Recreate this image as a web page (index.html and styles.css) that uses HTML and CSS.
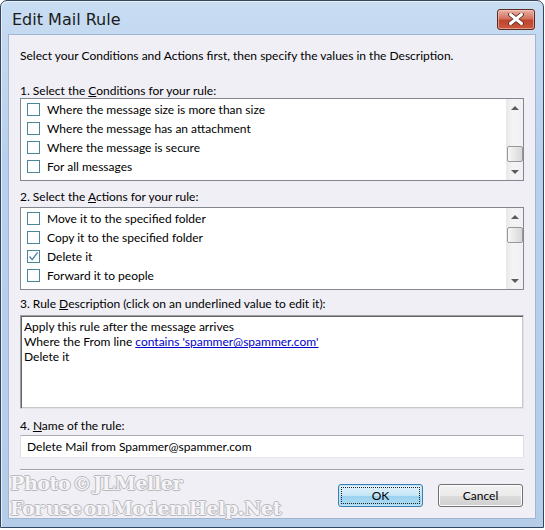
FILE: index.html
```html
<!DOCTYPE html>
<html lang="en">
<head>
  <meta charset="UTF-8" />
  <title>Edit Mail Rule</title>
  <link rel="stylesheet" href="styles.css">
</head>
<body>
  <div class="window">
    <div class="titlebar">
      <span class="title">Edit Mail Rule</span>
      <button class="close-btn" type="button" aria-label="Close">
        <svg width="18" height="12" viewBox="0 0 18 12">
          <path d="M3.5 1.5 L14.5 10.5 M14.5 1.5 L3.5 10.5" stroke="#5a2a20" stroke-width="4.8" stroke-linecap="round"/>
          <path d="M3.5 1.5 L14.5 10.5 M14.5 1.5 L3.5 10.5" stroke="#fff" stroke-width="3" stroke-linecap="round"/>
        </svg>
      </button>
    </div>
    <div class="client">
      <p class="intro">Select your Conditions and Actions first, then specify the values in the Description.</p>

      <div class="label label-1">1. Select the <u>C</u>onditions for your rule:</div>
      <div class="listbox">
        <ul class="items">
          <li><span class="check"></span>Where the message size is more than size</li>
          <li><span class="check"></span>Where the message has an attachment</li>
          <li><span class="check"></span>Where the message is secure</li>
          <li><span class="check"></span>For all messages</li>
        </ul>
        <div class="scrollbar">
          <span class="sb-btn"><span class="arrow-up"></span></span>
          <span class="sb-track"><span class="thumb thumb-low"></span></span>
          <span class="sb-btn"><span class="arrow-down"></span></span>
        </div>
      </div>

      <div class="label label-2">2. Select the <u>A</u>ctions for your rule:</div>
      <div class="listbox">
        <ul class="items">
          <li><span class="check"></span>Move it to the specified folder</li>
          <li><span class="check"></span>Copy it to the specified folder</li>
          <li><span class="check checked">
            <svg width="11" height="11" viewBox="0 0 11 11"><path d="M1.5 5.5 L4.2 8.6 L9.6 1.4" fill="none" stroke="#4f86ad" stroke-width="1.4"/></svg>
          </span>Delete it</li>
          <li><span class="check"></span>Forward it to people</li>
        </ul>
        <div class="scrollbar">
          <span class="sb-btn"><span class="arrow-up"></span></span>
          <span class="sb-track"><span class="thumb thumb-high"></span></span>
          <span class="sb-btn"><span class="arrow-down"></span></span>
        </div>
      </div>

      <div class="label label-3">3. Rule <u>D</u>escription (click on an underlined value to edit it):</div>
      <div class="desc">
        <div>Apply this rule after the message arrives</div>
        <div>Where the From line <a href="#">contains 'spammer@spammer.com'</a></div>
        <div>Delete it</div>
      </div>

      <div class="label label-4">4. <u>N</u>ame of the rule:</div>
      <input class="name-input" type="text" value="Delete Mail from Spammer@spammer.com" />

      <div class="separator"></div>

      <div class="buttons">
        <button class="btn btn-default" type="button"><span class="focus">OK</span></button>
        <button class="btn" type="button">Cancel</button>
      </div>

      <div class="watermark">
        <div>Photo © JLMeller</div>
        <div>For use on ModemHelp.Net</div>
      </div>
    </div>
  </div>
</body>
</html>
```

FILE: styles.css
```css
body {
  margin: 0;
  padding: 0;
  background-color: #fff;
  font-family: "Lato", "Open Sans", sans-serif;
  font-size: 12px;
  color: #000;
}
.window {
  width: 544px;
  height: 528px;
  box-sizing: border-box;
  border: 1px solid #34475f;
  border-radius: 7px 7px 0 0;
  background: linear-gradient(180deg, #c8dcf2 0%, #b9d0ec 30%, #b6cdea 100%);
  box-shadow: inset 1px 1px 0 #e6f0fa;
  padding: 0 7px 8px 7px;
  display: flex;
  flex-direction: column;
}
.titlebar {
  height: 33px;
  display: flex;
  align-items: center;
  justify-content: space-between;
}
.title {
  font-family: "DejaVu Sans", sans-serif;
  font-size: 16px;
  color: #1b1b1b;
  margin-left: 4px;
  margin-top: 3px;
}
.close-btn {
  width: 38px;
  height: 21px;
  margin-right: 1px;
  margin-top: 3px;
  padding: 0;
  border: 1px solid #5b2b22;
  border-radius: 3px;
  background: linear-gradient(180deg, #e9b2a6 0%, #d4725f 45%, #c0462f 55%, #c85a3e 100%);
  box-shadow: inset 0 0 0 1px rgba(255, 220, 210, 0.5);
  display: flex;
  align-items: center;
  justify-content: center;
}
.client {
  flex: 1;
  position: relative;
  background-color: #f0eff5;
  border: 1px solid #9fb5d2;
  padding: 0 11px;
  display: flex;
  flex-direction: column;
}
.intro {
  margin: 13px 0 0 0;
  line-height: 15px;
}
.label {
  line-height: 15px;
}
.label u {
  text-decoration-thickness: 1px;
}
.label-1 { margin-top: 20px; }
.label-2 { margin-top: 8px; margin-bottom: 3px; }
.label-3 { margin-top: 6px; margin-bottom: 4px; }
.label-4 { margin-top: 9px; margin-bottom: 2px; }
.listbox {
  height: 83px;
  box-sizing: border-box;
  border: 1px solid #828790;
  background-color: #fff;
  display: flex;
  overflow: hidden;
}
.items {
  list-style: none;
  margin: 0;
  padding: 1px 0 0 0;
  flex: 1;
}
.items li {
  height: 19px;
  display: flex;
  align-items: center;
  gap: 7px;
  padding-left: 6px;
}
.check {
  width: 11px;
  height: 11px;
  border: 1px solid #4a8798;
  background: #fff;
  display: flex;
  align-items: center;
  justify-content: center;
}
.scrollbar {
  width: 17px;
  display: flex;
  flex-direction: column;
  background: linear-gradient(90deg, #e8e8ea 0%, #f4f4f6 40%, #f1f1f3 100%);
}
.sb-btn {
  height: 17px;
  display: flex;
  align-items: center;
  justify-content: center;
}
.arrow-up {
  width: 0;
  height: 0;
  border-left: 4px solid transparent;
  border-right: 4px solid transparent;
  border-bottom: 4px solid #5c5c5c;
}
.arrow-down {
  width: 0;
  height: 0;
  border-left: 4px solid transparent;
  border-right: 4px solid transparent;
  border-top: 4px solid #5c5c5c;
}
.sb-track {
  flex: 1;
  display: flex;
  flex-direction: column;
  align-items: center;
}
.thumb {
  width: 14px;
  height: 14px;
  border: 1px solid #989898;
  border-radius: 2px;
  background: linear-gradient(90deg, #f6f6f6 0%, #e7e7e7 50%, #d7d7d7 100%);
}
.thumb-low { margin-top: 30px; }
.thumb-high { margin-top: 2px; }
.desc {
  height: 94px;
  box-sizing: border-box;
  background-color: #fff;
  border: 1px solid #a0a0a0;
  border-color: #a0a0a0 #e3e3e3 #e3e3e3 #a0a0a0;
  box-shadow: inset 1px 1px 0 #646464, inset -1px -1px 0 #c8c8c8;
  padding: 3px 3px 0 3px;
  line-height: 15px;
}
.desc a {
  color: #0000cc;
  text-decoration: underline;
}
.name-input {
  height: 23px;
  box-sizing: border-box;
  border: 1px solid #dbdfe6;
  border-top-color: #abadb3;
  border-bottom-color: #e3e9ef;
  background: #fff;
  padding: 0 6px;
  font-family: inherit;
  font-size: 12px;
  color: #000;
  outline: none;
}
.separator {
  margin-top: 11px;
  height: 1px;
  background-color: #a2a2a6;
  border-bottom: 1px solid #fdfdfd;
}
.buttons {
  margin-top: 13px;
  display: flex;
  justify-content: flex-end;
  gap: 15px;
  padding-right: 1px;
}
.btn {
  width: 85px;
  height: 23px;
  padding: 0;
  border: 1px solid #707070;
  border-radius: 3px;
  background: linear-gradient(180deg, #f2f2f2 0%, #ebebeb 50%, #dddddd 51%, #cfcfcf 100%);
  box-shadow: inset 0 0 0 1px #fcfcfc;
  font-family: inherit;
  font-size: 12px;
  color: #000;
  display: flex;
  align-items: center;
  justify-content: center;
}
.btn-default {
  border-color: #3c7fb1;
  background: linear-gradient(180deg, #e5f4fc 0%, #c4e5f6 50%, #98d1ef 51%, #b0dcf3 100%);
  box-shadow: inset 0 0 0 1px #c0e4f7;
  padding: 2px;
}
.btn-default .focus {
  flex: 1;
  align-self: stretch;
  border: 1px dotted #222;
  display: flex;
  align-items: center;
  justify-content: center;
}
.watermark {
  position: absolute;
  left: 1px;
  bottom: -3px;
  font-family: "DejaVu Serif", serif;
  font-weight: bold;
  font-size: 19px;
  line-height: 25px;
  color: #f6f6f8;
  letter-spacing: -0.4px;
  word-spacing: -4px;
  text-shadow: 1px 0 0 #b0b0b4, -1px 0 0 #b0b0b4, 0 1px 0 #b0b0b4, 0 -1px 0 #b0b0b4;
  opacity: 0.85;
}
```
